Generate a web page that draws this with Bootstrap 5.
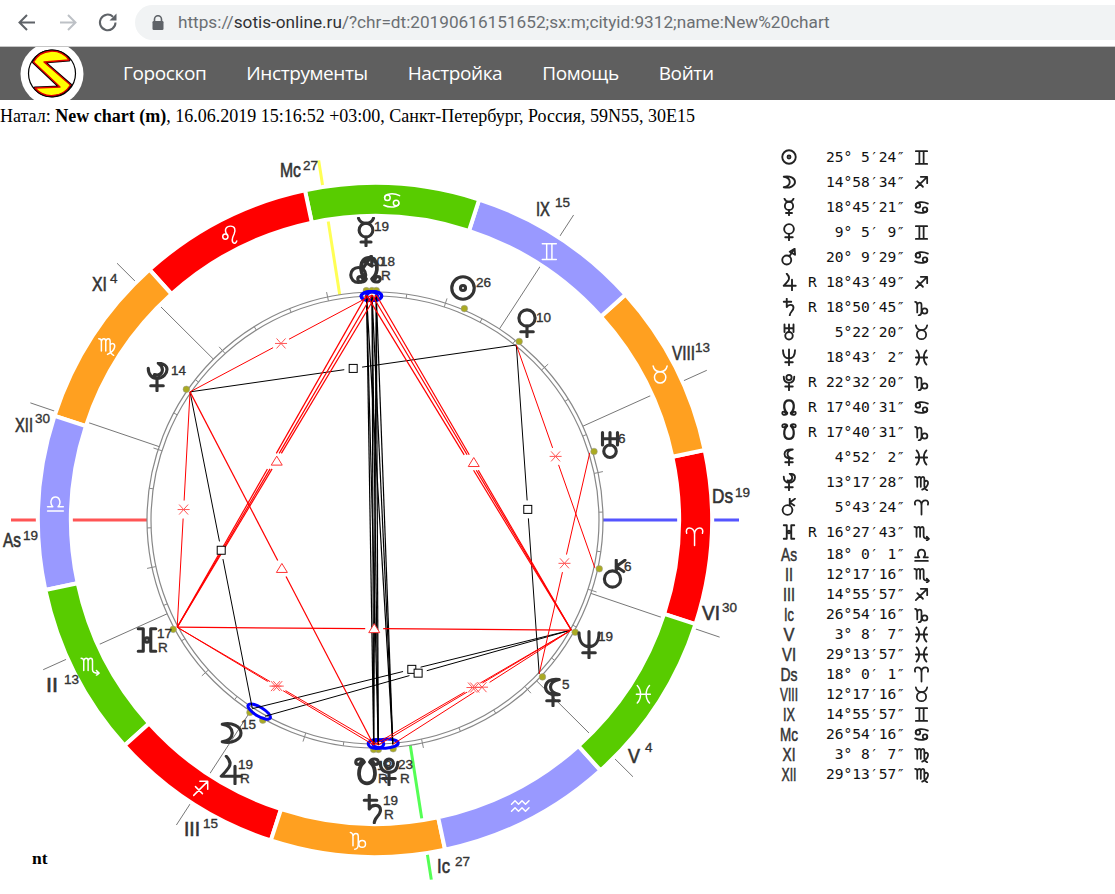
<!DOCTYPE html>
<html lang="ru">
<head>
    <meta charset="UTF-8">
    <meta name="viewport" content="width=device-width, initial-scale=1">
    <title>New chart</title>
    <link href="https://cdn.jsdelivr.net/npm/bootstrap@5.3.0/dist/css/bootstrap.min.css" rel="stylesheet">
    <style>
        html, body { height: 894px; overflow: hidden; }
        body { background: #fff; color: #000; font-family: "Liberation Serif", serif; font-size: 18px; }

        .chrome-bar { height: 47px; border-bottom: 1px solid #c6c6c6; padding: 5px 0 6px 0; }
        .url-pill { height: 35px; margin-left: 135px; background: #f1f3f4; border-radius: 18px 0 0 18px; padding-left: 17px;
          font-family: Roboto, sans-serif; font-size: 17.2px; color: #6b6f73; white-space: nowrap; }
        .url-lock { margin-right: 14px; flex: none; }
        .url-host { color: #303134; }
        .chrome-icons { position: absolute; left: 0; top: 0; }

        .site-nav { height: 53px; background: #5f5f5f; padding: 0; overflow: hidden; flex-wrap: nowrap; justify-content: flex-start; }
        .site-logo { margin-left: 20px; margin-right: 19px; width: 64px; height: 53px; flex: none; }
        .site-nav .nav-link { color: #fff; padding: 0 20px; font-family: "Open Sans", sans-serif; font-size: 19px; letter-spacing: -0.4px; }

        .chart-head { height: 30px; line-height: 32px; margin: 0; white-space: nowrap; }
        .chart-wrap { height: 764px; }
        .chart-svg { width: 770px; height: 764px; display: block; flex: none; }

        .sym { fill: none; stroke: currentColor; stroke-width: 2.5; stroke-linecap: round; stroke-linejoin: round; }
        .sym .solid { fill: currentColor; stroke: none; }
        .glyph { color: #333; }
        .sign-glyph { color: #fff; }
        .sign-glyph .sym { stroke-width: 1.7; }
        .lbl { font-family: "Liberation Sans", sans-serif; fill: #333; stroke: #333; }
        .house-lbl { font-size: 20px; stroke-width: .6; }
        .deg-lbl { font-size: 13.5px; stroke-width: .35; }
        .note { font-family: "Liberation Serif", serif; font-weight: 700; font-size: 17.5px; fill: #000; }

        .pos-table { margin: 14.5px 0 0 8px; width: auto; }
        .pos-table td { padding: 0; vertical-align: middle; background: transparent; border: 0; line-height: 1; }
        .pos-table .row-planet td { height: 25px; }
        .pos-table .row-house td { height: 20px; }
        .pos-icon { width: 30px; padding-left: 2px !important; color: #222; }
        .pos-icon svg { display: block; }
        .pos-mono { font-family: "DejaVu Sans Mono", monospace; font-size: 14.6px; color: #111; }
        .pos-r { width: 17px; }
        .pos-deg { width: 80px; text-align: right; white-space: pre; }
        .pos-sign { padding-left: 8px !important; color: #222; }
        .pos-sign svg { display: block; }
        .tbl-lbl { font-size: 18px; stroke-width: .5; }
        .tbl-lbl-box { margin-left: -6px; }
    </style>
</head>
<body>

<svg width="0" height="0" class="position-absolute">
    <defs>
        <symbol id="sun" viewBox="0 0 24 24"><circle cx="12" cy="12" r="9"/><circle class="solid" cx="12" cy="12" r="2"/></symbol>
        <symbol id="moon" viewBox="0 0 24 24"><path d="M5 5C13 3 20 7 20 12C20 17 13 21 5 19C11 18 13 15 13 12C13 9 11 6 5 5Z"/></symbol>
        <symbol id="mercury" viewBox="0 0 24 24"><path d="M6 1C7 4 9 5 12 5C15 5 17 4 18 1"/><circle cx="12" cy="10.5" r="5.5"/><path d="M12 16V23M8 20H16"/></symbol>
        <symbol id="venus" viewBox="0 0 24 24"><circle cx="12" cy="8" r="6.5"/><path d="M12 14.5V23M7 19H17"/></symbol>
        <symbol id="mars" viewBox="0 0 24 24"><circle cx="9" cy="16" r="6"/><path d="M12.5 11L18 3"/><path class="solid" d="M19.5 1L20 9L13 5Z"/></symbol>
        <symbol id="jupiter" viewBox="0 0 24 24"><path d="M9 1C12 4 13 7 11 10C9 13 7 15 5 17H21M16 9V23"/></symbol>
        <symbol id="saturn" viewBox="0 0 24 24"><path d="M5 5H15M9 1V12C11 8 18 8 18 13C18 17 13 19 13 23"/></symbol>
        <symbol id="uranus" viewBox="0 0 24 24"><path d="M6 2V12M18 2V12M6 7H18M12 2V12"/><circle cx="12" cy="17" r="5"/></symbol>
        <symbol id="neptune" viewBox="0 0 24 24"><path d="M4 3C4 11 8 14 12 14C16 14 20 11 20 3M12 2V23M7 19H17"/></symbol>
        <symbol id="pluto" viewBox="0 0 24 24"><circle cx="12" cy="6" r="3.5"/><path d="M5 5C5 11 8 13 12 13C16 13 19 11 19 5M12 13V23M7 18H17"/></symbol>
        <symbol id="northnode" viewBox="0 0 24 24"><path d="M9.500 20C4 15 4 3 12 3C20 3 20 15 14.500 20" stroke-width="3"/><path d="M9.500 20C9.500 23 3 23.500 3 20C3 17.500 7 17.500 7 20M14.500 20C14.500 23 21 23.500 21 20C21 17.500 17 17.500 17 20"/></symbol>
        <symbol id="southnode" viewBox="0 0 24 24"><path d="M9.500 4C4 9 4 21 12 21C20 21 20 9 14.500 4" stroke-width="3"/><path d="M9.500 4C9.500 1 3 0.500 3 4C3 6.500 7 6.500 7 4M14.500 4C14.500 1 21 0.500 21 4C21 6.500 17 6.500 17 4"/></symbol>
        <symbol id="lilith" viewBox="0 0 24 24"><path d="M17 2C10 1 6 4 6 8C6 12 10 15 17 14C12 13 10 11 10 8C10 5 12 3 17 2ZM12 14V23M7 19H17"/></symbol>
        <symbol id="proserpina" viewBox="0 0 24 24"><path d="M5 5C5 10 8 13 12 13C17 13 20 9 20 6C20 3 17 1 13 1C16 3 17 5 16 8C15 10 13 11 10 10M12 13V23M7 19H17"/></symbol>
        <symbol id="chiron" viewBox="0 0 24 24"><circle cx="10" cy="16" r="6.500"/><path d="M13 10V1M13 6L20 1M13 6L19 10"/></symbol>
        <symbol id="hades" viewBox="0 0 24 24"><path d="M5 3H9V21H5M19 3H15V21H19"/><circle class="solid" cx="12" cy="12" r="1.800"/></symbol>

        <symbol id="aries" viewBox="0 0 24 24"><path d="M12 22V9C12 4 9 2 6 2C3 2 2 5 3 8M12 9C12 4 15 2 18 2C21 2 22 5 21 8"/></symbol>
        <symbol id="taurus" viewBox="0 0 24 24"><circle cx="12" cy="15" r="6.5"/><path d="M4 2C5 7 8 8.5 12 8.5C16 8.5 19 7 20 2"/></symbol>
        <symbol id="gemini" viewBox="0 0 24 24"><path d="M4 3H20M4 21H20M9 3V21M15 3V21"/></symbol>
        <symbol id="cancer" viewBox="0 0 24 24"><circle cx="7" cy="9" r="3.2"/><circle cx="17" cy="15" r="3.2"/><path d="M3.8 9C4 4 14 3 21 6.5M20.2 15C20 20 10 21 3 17.5"/></symbol>
        <symbol id="leo" viewBox="0 0 24 24"><circle cx="7" cy="14" r="3"/><path d="M9 12C5 6 8 2 13 2C18 2 19 6 17 11C15 15 14 19 16 21C17 22 19 22 20 19"/></symbol>
        <symbol id="virgo" viewBox="0 0 24 24"><path d="M3 4C5 4 6 5 6 7V18M6 7C7 3 11 3 11 7V18M11 7C12 3 16 3 16 7V17C16 20 18 22 20 23M16 11C19 8 22 10 21 14C20 18 17 20 13 22"/></symbol>
        <symbol id="libra" viewBox="0 0 24 24"><path d="M3 21H21M3 16H9C5 12 7 5 12 5C17 5 19 12 15 16H21"/></symbol>
        <symbol id="scorpio" viewBox="0 0 24 24"><path d="M2 4C4 4 5 5 5 7V18M5 7C6 3 10 3 10 7V18M10 7C11 3 15 3 15 7V17C15 20 17 21 22 21M19.5 18L22.5 21L19.5 23.5"/></symbol>
        <symbol id="sagittarius" viewBox="0 0 24 24"><path d="M4 20L20 4M11 4H20V13M6 10L14 18"/></symbol>
        <symbol id="capricorn" viewBox="0 0 24 24"><path d="M3 4C5 4 6 6 6 9V19M6 8C7 4 12 4 12 8V18C12 21 10 23 8 23"/><circle cx="16.5" cy="17" r="3.8"/></symbol>
        <symbol id="aquarius" viewBox="0 0 24 24"><path d="M2 11L6 7L10 11L14 7L18 11L22 7M2 19L6 15L10 19L14 15L18 19L22 15"/></symbol>
        <symbol id="pisces" viewBox="0 0 24 24"><path d="M5 2C10 7 10 17 5 22M19 2C14 7 14 17 19 22M4 12H20"/></symbol>
    </defs>
</svg>

<!-- browser bar from the screenshot -->
<div class="chrome-bar position-relative">
    <svg class="chrome-icons" width="130" height="46" fill="none" stroke-width="2">
        <path d="M35 22.500H20M27 15L19.500 22.500L27 30" stroke="#5f6368"/>
        <path d="M60 22.500H75M68 15L75.500 22.500L68 30" stroke="#bdc1c6"/>
        <path d="M115.500 22.500A7.800 7.800 0 1 1 113 16.700" stroke="#5f6368"/>
        <path d="M116.500 13.500V20.500H109.500Z" fill="#5f6368"/>
    </svg>
    <div class="url-pill d-flex align-items-center">
        <svg class="url-lock" width="12" height="15"><path d="M2.500 6V4.200A3.500 3.500 0 0 1 9.500 4.200V6" fill="none" stroke="#5f6368" stroke-width="1.600"/><rect x="0.500" y="6" width="11" height="9" rx="1.200" fill="#5f6368"/></svg>
        <span>https://<span class="url-host">sotis-online.ru</span>/?chr=dt:20190616151652;sx:m;cityid:9312;name:New%20chart</span>
    </div>
</div>

<nav class="navbar site-nav">
    <svg class="site-logo" viewBox="20 47 64 53">
        <circle cx="52" cy="74" r="31.500" fill="#fff"/>
        <circle cx="52" cy="73.500" r="23.500" fill="#fff" stroke="#000" stroke-width="1.200"/>
        <path d="M33.500 62A21 21 0 0 1 69 60L44 62L70.500 85A22 22 0 0 1 35 88L60 87Z" fill="#ffff00" stroke="#000" stroke-width="3.200" stroke-linejoin="round"/>
        <path d="M33.500 62A21 21 0 0 1 69 60L44 62L70.500 85A22 22 0 0 1 35 88L60 87Z" fill="#ffff00" stroke="#e00000" stroke-width="1.400" stroke-linejoin="round"/>
    </svg>
    <ul class="navbar-nav flex-row">
        <li class="nav-item"><a class="nav-link" href="#">Гороскоп</a></li>
        <li class="nav-item"><a class="nav-link" href="#">Инструменты</a></li>
        <li class="nav-item"><a class="nav-link" href="#">Настройка</a></li>
        <li class="nav-item"><a class="nav-link" href="#">Помощь</a></li>
        <li class="nav-item"><a class="nav-link" href="#">Войти</a></li>
    </ul>
</nav>

<p class="chart-head">Натал: <b>New chart (m)</b>, 16.06.2019 15:16:52 +03:00, Санкт-Петербург, Россия, 59N55, 30E15</p>

<div class="chart-wrap d-flex align-items-start">
    <svg id="chart" class="chart-svg" viewBox="0 130 770 764"></svg>
    <table class="table table-borderless pos-table"><tbody id="positions"></tbody></table>
</div>

<script src="https://cdn.jsdelivr.net/npm/bootstrap@5.3.0/dist/js/bootstrap.bundle.min.js"></script>
<script>
    const CX = 375, CY = 520, ASC = 198.003;
    const SIGNS = ['aries', 'taurus', 'gemini', 'cancer', 'leo', 'virgo', 'libra', 'scorpio', 'sagittarius', 'capricorn', 'aquarius', 'pisces'];
    const COLORS = ['#ff0000', '#ffa020', '#9999ff', '#58cc00'];

    // name, retro, sign index, d, m, s
    const PLANETS = [
      ['sun', '', 2, 25, 5, 24], ['moon', '', 8, 14, 58, 34], ['mercury', '', 3, 18, 45, 21], ['venus', '', 2, 9, 5, 9],
      ['mars', '', 3, 20, 9, 29], ['jupiter', 'R', 8, 18, 43, 49], ['saturn', 'R', 9, 18, 50, 45], ['uranus', '', 1, 5, 22, 20],
      ['neptune', '', 11, 18, 43, 2], ['pluto', 'R', 9, 22, 32, 20], ['northnode', 'R', 3, 17, 40, 31], ['southnode', 'R', 9, 17, 40, 31],
      ['lilith', '', 11, 4, 52, 2], ['proserpina', '', 5, 13, 17, 28], ['chiron', '', 0, 5, 43, 24], ['hades', 'R', 7, 16, 27, 43]
    ];
    // label, label width in the table, sign index, d, m, s
    const HOUSES = [
      ['As', 16, 6, 18, 0, 1], ['II', 8, 7, 12, 17, 16], ['III', 12, 8, 14, 55, 57], ['Ic', 10, 9, 26, 54, 16],
      ['V', 11, 11, 3, 8, 7], ['VI', 14, 11, 29, 13, 57], ['Ds', 17, 0, 18, 0, 1], ['VIII', 18, 1, 12, 17, 16],
      ['IX', 12, 2, 14, 55, 57], ['Mc', 18, 3, 26, 54, 16], ['XI', 13, 5, 3, 8, 7], ['XII', 15, 5, 29, 13, 57]
    ];

    const lon = {};
    PLANETS.forEach(p => { lon[p[0]] = p[2] * 30 + p[3] + p[4] / 60 + p[5] / 3600; });

    function pt(l, r) {
      const a = (l - ASC) * Math.PI / 180;
      return [CX - r * Math.cos(a), CY + r * Math.sin(a)];
    }
    const f = n => n.toFixed(2);
    let out = '';
    const line = (a, b, color, w) => { out += `<line x1="${f(a[0])}" y1="${f(a[1])}" x2="${f(b[0])}" y2="${f(b[1])}" stroke="${color}" stroke-width="${w}"/>`; };
    const use = (id, x, y, size, cls) => { out += `<g class="${cls}"><use href="#${id}" class="sym" x="${x - size / 2}" y="${y - size / 2}" width="${size}" height="${size}"/></g>`; };
    const txt = (s, x, y, cls, w) => { out += `<text x="${x}" y="${y}" class="${cls}"${w ? ` data-w="${w}"` : ''}>${s}</text>`; };

    // squeeze a label to the narrow width it has in the picture
    function squeeze(root) {
      root.querySelectorAll('text[data-w]').forEach(t => {
        const x = t.getAttribute('x'), y = t.getAttribute('y');
        t.setAttribute('x', 0);
        t.setAttribute('y', 0);
        t.setAttribute('transform', `translate(${x} ${y}) scale(${(t.dataset.w / t.getComputedTextLength()).toFixed(3)} 1)`);
      });
    }

    // house cusps, under the ring
    HOUSES.forEach(h => {
      const l = h[2] * 30 + h[3] + h[4] / 60 + h[5] / 3600;
      const special = { As: '#ff5555', Ds: '#5555ff', Mc: '#ffff55', Ic: '#55ff55' }[h[0]];
      line(pt(l, 228), pt(l, 364), special || '#777', special ? 3 : 1);
    });

    // zodiac ring
    const R1 = 337, R2 = 304;
    SIGNS.forEach((s, i) => {
      const l1 = i * 30, l2 = l1 + 30;
      const a = pt(l1, R1), b = pt(l2, R1), c = pt(l2, R2), d = pt(l1, R2);
      out += `<path d="M${f(a[0])} ${f(a[1])}A${R1} ${R1} 0 0 0 ${f(b[0])} ${f(b[1])}L${f(c[0])} ${f(c[1])}A${R2} ${R2} 0 0 1 ${f(d[0])} ${f(d[1])}Z" fill="${COLORS[i % 4]}" stroke="#fff" stroke-width="4"/>`;
    });
    SIGNS.forEach((s, i) => {
      const m = pt(i * 30 + 15, 320);
      use(s, m[0], m[1], 21, 'sign-glyph');
    });

    // graduated circle
    out += `<circle cx="${CX}" cy="${CY}" r="228" fill="none" stroke="#888" stroke-width="1.200"/><circle cx="${CX}" cy="${CY}" r="224" fill="none" stroke="#888" stroke-width="1.200"/>`;
    for (let l = 0; l < 360; l += 10) line(pt(l, 224), pt(l, l % 30 ? 228 : 233), '#888', 1);

    // planet dots
    PLANETS.forEach(p => {
      const c = pt(lon[p[0]], 229.5);
      out += `<circle cx="${f(c[0])}" cy="${f(c[1])}" r="3.300" fill="#aaaa22" stroke="#999" stroke-width=".5"/>`;
    });

    // conjunctions, the aspect lines run over them
    [['mercury', 'mars'], ['mercury', 'northnode'], ['mars', 'northnode'], ['saturn', 'pluto'], ['saturn', 'southnode'], ['moon', 'jupiter']].forEach(c => {
      const a = pt(lon[c[0]], 224), b = pt(lon[c[1]], 224);
      const mx = (a[0] + b[0]) / 2, my = (a[1] + b[1]) / 2;
      const rx = Math.hypot(b[0] - a[0], b[1] - a[1]) / 2 + 5.5;
      const ang = Math.atan2(b[1] - a[1], b[0] - a[0]) * 180 / Math.PI;
      out += `<ellipse cx="${f(mx)}" cy="${f(my)}" rx="${f(rx)}" ry="4.500" fill="none" stroke="#0000ff" stroke-width="3" transform="rotate(${f(ang)} ${f(mx)} ${f(my)})"/>`;
    });

    // aspects
    const markers = [];
    function aspect(p, q, kind, noMark) {
      const a = pt(lon[p], 225), b = pt(lon[q], 225);
      const color = kind === 'square' || kind === 'opp' ? '#000' : '#ff0000';
      if (kind === 'opp') { line(a, b, color, 1.2); return; }
      const mx = (a[0] + b[0]) / 2, my = (a[1] + b[1]) / 2;
      const len = Math.hypot(b[0] - a[0], b[1] - a[1]);
      const gx = (b[0] - a[0]) / len * 9, gy = (b[1] - a[1]) / len * 9;
      const w = kind === 'trine' ? 1.2 : 1;
      line(a, [mx - gx, my - gy], color, w);
      line([mx + gx, my + gy], b, color, w);
      if (!noMark) markers.push([kind, mx, my]);
    }
    const topGroup = ['mercury', 'mars', 'northnode'], bottomGroup = ['saturn', 'pluto', 'southnode'];
    topGroup.forEach(p => bottomGroup.forEach(q => aspect(p, q, 'opp')));
    [['proserpina', 'venus'], ['proserpina', 'moon'], ['venus', 'lilith'], ['neptune', 'moon'], ['neptune', 'jupiter']].forEach(a => aspect(a[0], a[1], 'square'));
    topGroup.forEach(p => {
      aspect('hades', p, 'trine', p !== 'northnode');
      aspect('neptune', p, 'trine', p !== 'northnode');
    });
    aspect('hades', 'neptune', 'trine');
    aspect('proserpina', 'southnode', 'trine');
    [['proserpina', 'mercury'], ['proserpina', 'hades'], ['venus', 'chiron'], ['uranus', 'lilith'], ['hades', 'saturn'], ['hades', 'southnode'],
      ['neptune', 'saturn'], ['neptune', 'pluto'], ['neptune', 'southnode']].forEach(a => aspect(a[0], a[1], 'sextile'));

    markers.forEach(m => {
      const x = m[1], y = m[2];
      if (m[0] === 'square') out += `<rect x="${f(x - 4)}" y="${f(y - 4)}" width="8" height="8" fill="#fff" stroke="#000"/>`;
      if (m[0] === 'trine') out += `<path d="M${f(x - 5.5)} ${f(y + 4)}H${f(x + 5.500)}L${f(x)} ${f(y - 5)}Z" fill="#fff" stroke="#ff3333"/>`;
      if (m[0] === 'sextile') out += `<path d="M${f(x - 6)} ${f(y)}H${f(x + 6)}M${f(x - 4.500)} ${f(y - 5)}L${f(x + 4.500)} ${f(y + 5)}M${f(x + 4.500)} ${f(y - 5)}L${f(x - 4.500)} ${f(y + 5)}" fill="none" stroke="#ff5555"/>`;
    });

    // planet glyphs on the chart: name, x, y, degree text, degree x, y, R x, y
    [
      ['sun', 463, 288, '26', 476, 287], ['venus', 527, 323, '10', 536, 322],
      ['mercury', 366, 232, '19', 374, 231], ['mars', 362, 270, '20', 369, 266],
      ['northnode', 369, 269, '18', 380, 266, 381, 280],
      ['uranus', 610, 445, '6', 618, 443], ['chiron', 615, 574, '6', 624, 571],
      ['neptune', 589, 644, '19', 598, 641], ['lilith', 553, 692, '5', 562, 689],
      ['proserpina', 157, 377, '14', 171, 375], ['hades', 147, 640, '17', 157, 638, 158, 652],
      ['moon', 231, 733, '15', 241, 729], ['jupiter', 230, 770, '19', 238, 769, 240, 783],
      ['southnode', 367, 772, '18', 377, 770, 378, 783], ['pluto', 389, 771, '23', 398, 769, 400, 783],
      ['saturn', 373, 809, '19', 383, 805, 384, 819]
    ].forEach(g => {
      use(g[0], g[1], g[2], 30, 'glyph');
      txt(g[3], g[4], g[5], 'lbl deg-lbl');
      if (g[6]) txt('R', g[6], g[7], 'lbl deg-lbl');
    });

    // house labels: text, x, baseline, width, number, x, baseline
    [
      ['Mc', 280, 177, 21, '27', 303, 170], ['IX', 536, 216, 14, '15', 555, 207], ['VIII', 672, 360, 23, '13', 695, 352],
      ['Ds', 712, 503, 21, '19', 735, 497], ['VI', 702, 620, 18, '30', 722, 612], ['V', 628, 763, 12, '4', 645, 752],
      ['Ic', 437, 873, 13, '27', 455, 866], ['III', 184, 836, 16, '15', 203, 828], ['II', 46, 692, 12, '13', 64, 684],
      ['As', 3, 547, 18, '19', 23, 540], ['XII', 15, 432, 18, '30', 35, 423], ['XI', 92, 291, 15, '4', 110, 283]
    ].forEach(h => {
      txt(h[0], h[1], h[2], 'lbl house-lbl', h[3]);
      txt(h[4], h[5], h[6], 'lbl deg-lbl');
    });

    txt('nt', 32, 864, 'note');
    const chart = document.getElementById('chart');
    chart.innerHTML = out;
    squeeze(chart);

    // positions table
    const pad = n => String(n).padStart(2, ' ');
    const deg = r => `${pad(r[3])}°${pad(r[4])}′${pad(r[5])}″`;
    const icon = (id, size) => `<svg width="${size}" height="${size}"><use href="#${id}" class="sym" width="${size}" height="${size}"/></svg>`;
    let rows = '';
    PLANETS.forEach(p => {
      rows += `<tr class="row-planet"><td class="pos-icon">${icon(p[0], 18)}</td><td class="pos-r pos-mono">${p[1]}</td><td class="pos-deg pos-mono">${deg(p)}</td><td class="pos-sign">${icon(SIGNS[p[2]], 17)}</td></tr>`;
    });
    HOUSES.forEach(h => {
      const l = `<svg class="tbl-lbl-box" width="30" height="18"><text x="15" y="15" text-anchor="middle" class="lbl tbl-lbl" data-w="${h[1]}">${h[0]}</text></svg>`;
      rows += `<tr class="row-house"><td class="pos-icon">${l}</td><td class="pos-r pos-mono"></td><td class="pos-deg pos-mono">${deg(h)}</td><td class="pos-sign">${icon(SIGNS[h[2]], 17)}</td></tr>`;
    });
    const positions = document.getElementById('positions');
    positions.innerHTML = rows;
    squeeze(positions);
</script>
</body>
</html>
